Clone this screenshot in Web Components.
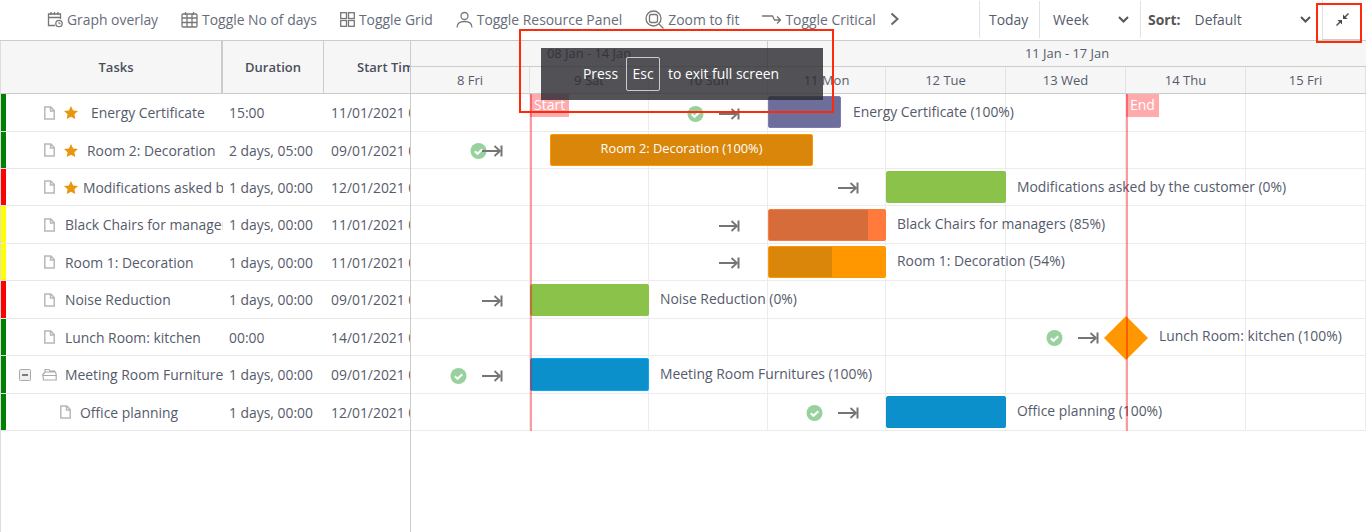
<!DOCTYPE html>
<html lang="en">
<head>
<meta charset="utf-8">
<title>Gantt</title>
<style>
  html, body { margin: 0; height: 100%; background: #fff; overflow: hidden; }
  body {
    font-family: "Open Sans", "Liberation Sans", sans-serif;
    font-size: 13.9px;
    color: #555b6b;
    --rows: 38px 37px 37px 38px 37px 38px 37px 38px 37px;
    --cols: 119px 119px 119px 118px 120px 120px 120px 120px;
  }
  svg { display: block; }
  .ic { fill: none; stroke: #777; stroke-width: 1.3; }
</style>
</head>
<body>
<gantt-app>
  <gantt-toolbar>
    <tool-btn>
      <svg slot="icon" class="ic" width="16" height="17" viewBox="0 0 16 17"><path d="M8 14.500H1.500V3h12v5M1.500 6.500h12M4 1v3M7.500 1v3M11 1v3"/><circle cx="12" cy="12.500" r="3.200"/><path d="M12 10.800v1.900h1.500" stroke-width="1"/></svg>
      Graph overlay
    </tool-btn>
    <tool-btn>
      <svg slot="icon" class="ic" width="17" height="17" viewBox="0 0 17 17"><rect x="1" y="3" width="15" height="13" rx="1"/><path d="M1 7h15M1 11.500h15M6 3v13M11 3v13M4.500 1v3M12.500 1v3"/></svg>
      Toggle No of days
    </tool-btn>
    <tool-btn>
      <svg slot="icon" class="ic" width="15" height="15" viewBox="0 0 15 15"><rect x=".7" y=".7" width="5.800" height="5.800"/><rect x="8.500" y=".7" width="5.800" height="5.800"/><rect x=".7" y="8.500" width="5.800" height="5.800"/><rect x="8.500" y="8.500" width="5.800" height="5.800"/></svg>
      Toggle Grid
    </tool-btn>
    <tool-btn>
      <svg slot="icon" class="ic" width="17" height="17" viewBox="0 0 17 17"><circle cx="8.500" cy="5" r="3.500"/><path d="M1 16.500c0-4 3.200-6 7.500-6s7.500 2 7.500 6"/></svg>
      Toggle Resource Panel
    </tool-btn>
    <tool-btn>
      <svg slot="icon" class="ic" width="19" height="19" viewBox="0 0 19 19"><circle cx="8.500" cy="8.500" r="7.500"/><rect x="4.500" y="4.500" width="8" height="8" rx="2"/><path d="M14 14l4.500 4.500"/></svg>
      Zoom to fit
    </tool-btn>
    <tool-btn>
      <svg slot="icon" class="ic" width="19" height="12" viewBox="0 0 19 12"><path d="M0 3h10.500l2 4h6M15 3.500l3.500 3.500-3.500 3.500"/></svg>
      Toggle Critical
    </tool-btn>
    <svg width="9" height="14" viewBox="0 0 9 14" style="margin-left:-9px;fill:none;stroke:#666;stroke-width:2"><path d="M1.500 1.500l6 5.500-6 5.500"/></svg>
  </gantt-toolbar>
  <gantt-main>
    <task-panel slot="left">
      <task-row status="green" star gap="13" name="Energy Certificate" dur="15:00" start="11/01/2021 00:00"></task-row>
      <task-row status="green" star gap="9" name="Room 2: Decoration" dur="2 days, 05:00" start="09/01/2021 00:00"></task-row>
      <task-row status="red" star gap="5" name="Modifications asked by the customer" dur="1 days, 00:00" start="12/01/2021 00:00"></task-row>
      <task-row status="yellow" name="Black Chairs for managers" dur="1 days, 00:00" start="11/01/2021 00:00"></task-row>
      <task-row status="yellow" name="Room 1: Decoration" dur="1 days, 00:00" start="11/01/2021 00:00"></task-row>
      <task-row status="red" name="Noise Reduction" dur="1 days, 00:00" start="09/01/2021 00:00"></task-row>
      <task-row status="green" name="Lunch Room: kitchen" dur="00:00" start="14/01/2021 00:00"></task-row>
      <task-row status="green" folder name="Meeting Room Furnitures" dur="1 days, 00:00" start="09/01/2021 00:00"></task-row>
      <task-row status="green" child gap="9" name="Office planning" dur="1 days, 00:00" start="12/01/2021 00:00"></task-row>
    </task-panel>
    <gantt-chart slot="right">
      <gantt-row check="695" arrow="719" x="768" w="73" gap="12" color="#6e6e9a" edge="#7c7cb0" label="Energy Certificate (100%)"></gantt-row>
      <gantt-row check="478" arrow="482" x="550" w="263" color="#d9860a" edge="#ff9800" inside label="Room 2: Decoration (100%)"></gantt-row>
      <gantt-row arrow="838" x="886" w="120" color="#8bc34a" edge="#8bc34a" label="Modifications asked by the customer (0%)"></gantt-row>
      <gantt-row top="3" ty="2" arrow="719" x="768" w="118" color="#ff7a3b" edge="#ff7a3b" progress="85" fill="#d66c39" label="Black Chairs for managers (85%)"></gantt-row>
      <gantt-row ty="1" arrow="719" x="768" w="118" color="#ff9800" edge="#ff9800" progress="54" fill="#d9860a" label="Room 1: Decoration (54%)"></gantt-row>
      <gantt-row top="3" ty="2" arrow="482" x="530" w="119" color="#8bc34a" edge="#8bc34a" label="Noise Reduction (0%)"></gantt-row>
      <gantt-row ty="1" check="1054" arrow="1078" milestone="1126" label="Lunch Room: kitchen (100%)"></gantt-row>
      <gantt-row h="33" check="458" arrow="482" x="530" w="119" color="#0c90cc" edge="#00aaff" label="Meeting Room Furnitures (100%)"></gantt-row>
      <gantt-row ty="1" check="814" arrow="838" x="886" w="120" color="#0c90cc" edge="#0c90cc" label="Office planning (100%)"></gantt-row>
    </gantt-chart>
  </gantt-main>
  <fs-toast></fs-toast>
  <red-box x="519" y="29" w="315" h="84"></red-box>
  <red-box x="1316" y="3" w="46" h="40"></red-box>
</gantt-app>

<script>
const ORIGIN = 411;

class GanttApp extends HTMLElement {
  constructor() {
    super();
    this.attachShadow({ mode: "open" });
    this.shadowRoot.innerHTML = `
      <style>
        :host { display: flex; flex-direction: column; position: relative; height: 532px; overflow: hidden; }
      </style>
      <slot></slot>`;
  }
}

class GanttToolbar extends HTMLElement {
  constructor() {
    super();
    this.attachShadow({ mode: "open" });
    this.shadowRoot.innerHTML = `
      <style>
        :host { display: flex; align-items: stretch; height: 40px; flex: none; box-sizing: border-box; padding-left: 47px; white-space: nowrap; }
        .left { display: flex; align-items: center; gap: 23px; height: 38px; }
        .right { margin-left: auto; display: flex; align-items: stretch; height: 40px; }
        .cell { display: flex; align-items: center; height: 37px; margin-top: 1px; border-left: 1px solid #e2e2e2; box-sizing: border-box; }
        .today { width: 60px; padding-left: 9px; }
        .week { width: 101px; padding-left: 13px; }
        .sort { width: 182px; padding-left: 7px; }
        .sort b { font-weight: 700; margin-right: 14px; color: #555; }
        .chev { margin-left: auto; margin-right: 11px; fill: none; stroke: #555; stroke-width: 2; }
        .full { width: 40px; height: 40px; box-sizing: border-box; margin-right: 4px; border-left: 1px solid #e2e2e2; border-bottom: 1px solid #ccc; display: flex; align-items: center; justify-content: center; }
      </style>
      <div class="left"><slot></slot></div>
      <div class="right">
        <div class="cell today">Today</div>
        <div class="cell week">Week
          <svg class="chev" width="11" height="7" viewBox="0 0 11 7"><path d="M1 1l4.500 4.500L10 1"/></svg>
        </div>
        <div class="cell sort"><b>Sort:</b>Default
          <svg class="chev" width="11" height="7" viewBox="0 0 11 7"><path d="M1 1l4.500 4.500L10 1"/></svg>
        </div>
        <div class="full">
          <svg width="13" height="13" viewBox="0 0 13 13"><path fill="#4a4a4a" d="M7 6V1.500L11.500 6zM6 7v4.500L1.500 7z"/><path stroke="#555" stroke-width="1.500" d="M9 4l3.500-3.500M4 9L.5 12.500"/></svg>
        </div>
      </div>`;
  }
}

class ToolBtn extends HTMLElement {
  constructor() {
    super();
    this.attachShadow({ mode: "open" });
    this.shadowRoot.innerHTML = `
      <style>
        :host { display: inline-flex; align-items: center; gap: 4px; color: #666c7a; }
      </style>
      <slot name="icon"></slot><slot></slot>`;
  }
}

class GanttMain extends HTMLElement {
  constructor() {
    super();
    this.attachShadow({ mode: "open" });
    this.shadowRoot.innerHTML = `
      <style>
        :host { display: flex; flex: 1; border-top: 1px solid #ccc; min-height: 0; }
      </style>
      <slot name="left"></slot><slot name="right"></slot>`;
  }
}

class TaskPanel extends HTMLElement {
  constructor() {
    super();
    this.attachShadow({ mode: "open" });
    this.shadowRoot.innerHTML = `
      <style>
        :host { display: block; flex: none; width: 411px; box-sizing: border-box; border-left: 1px solid #ddd; border-right: 1px solid #ccc; overflow: hidden; }
        .head { display: grid; grid-template-columns: 220px 2px 100px 1px 1fr; height: 53px; box-sizing: border-box; background: #f6f6f6; border-bottom: 1px solid #ccc; font-size: 13px; font-weight: 600; color: #4a4f5c; white-space: nowrap; }
        .head div { display: flex; align-items: center; justify-content: center; overflow: hidden; }
        .head i { background: #ccc; }
        .head .tasks { padding-left: 10px; }
        .head .st { justify-content: flex-start; padding-left: 33px; }
        .body { display: grid; grid-template-rows: var(--rows); }
      </style>
      <div class="head"><div class="tasks">Tasks</div><i></i><div>Duration</div><i></i><div class="st">Start Time</div></div>
      <div class="body"><slot></slot></div>`;
  }
}

class TaskRow extends HTMLElement {
  constructor() {
    super();
    this.attachShadow({ mode: "open" });
  }

  connectedCallback() {
    const colors = { green: "#008000", red: "#ff0000", yellow: "#ffff00" };
    const strip = colors[this.getAttribute("status")];
    const gap = this.getAttribute("gap") || 10;
    const doc = `<svg class="doc" width="11" height="14" viewBox="0 0 11 14"><path d="M.8 1h6L10.200 4.500V13H.8zM6.500 1v4h3.700" fill="none" stroke="#b8b8b8" stroke-width="1.500"/></svg>`;
    const star = `<svg class="star" width="14" height="13" viewBox="0 0 14 13"><path fill="#e8960c" d="M7 0l2.100 4.400 4.900.6-3.600 3.300.9 4.700L7 10.700 2.700 13l.9-4.700L0 5l4.900-.6z"/></svg>`;
    const folder = `<svg class="doc" style="margin-left:-2px" width="15" height="13" viewBox="0 0 15 13"><path d="M3 4V1.500h4l1 1.500h4.500v1.500M.8 6.500L3 4h10.500l.7 2.500v5.500H1.500zM1 7.500h13" fill="none" stroke="#aaa" stroke-width="1.200"/></svg>`;
    const toggle = `<svg class="tog" width="12" height="12" viewBox="0 0 12 12"><rect x=".5" y=".5" width="11" height="11" rx="1" fill="#eee" stroke="#aaa"/><path d="M3 6h6" stroke="#555" stroke-width="1.500"/></svg>`;
    const isFolder = this.hasAttribute("folder");
    const gutter = this.hasAttribute("child") ? 54 : 38;

    this.shadowRoot.innerHTML = `
      <style>
        :host { display: flex; align-items: stretch; border-bottom: 1px solid #e8e8e8; white-space: nowrap; min-height: 0; }
        .strip { width: 5px; flex: none; background: ${strip}; }
        .name { width: 217px; flex: none; display: flex; align-items: center; overflow: hidden; }
        .gut { width: ${gutter}px; flex: none; display: flex; align-items: center; padding-left: 13px; box-sizing: border-box; }
        .doc { flex: none; }
        .star { flex: none; margin-left: 9px; }
        .label { margin-left: ${isFolder ? 8 : gap}px; color: #555b6b; }
        .dur { width: 94px; flex: none; padding-left: 6px; display: flex; align-items: center; }
        .start { padding-left: 8px; display: flex; align-items: center; overflow: hidden; flex: 1; min-width: 0; }
      </style>
      <div class="strip"></div>
      <div class="name">
        <div class="gut">${isFolder ? toggle : ""}</div>
        ${isFolder ? folder : doc}${this.hasAttribute("star") ? star : ""}
        <span class="label">${this.getAttribute("name")}</span>
      </div>
      <div class="dur">${this.getAttribute("dur")}</div>
      <div class="start">${this.getAttribute("start")}</div>`;
  }
}

class GanttChart extends HTMLElement {
  constructor() {
    super();
    this.attachShadow({ mode: "open" });
    const days = ["8 Fri", "9 Sat", "10 Sun", "11 Mon", "12 Tue", "13 Wed", "14 Thu", "15 Fri"];
    this.shadowRoot.innerHTML = `
      <style>
        :host { display: block; flex: 1; min-width: 0; position: relative; overflow: hidden; }
        .weeks { display: grid; grid-template-columns: 357px 1fr; height: 26px; box-sizing: border-box; background: #f6f6f6; border-bottom: 1px solid #ccc; font-size: 12.9px; }
        .weeks div { display: flex; align-items: center; justify-content: center; padding-bottom: 2px; box-sizing: border-box; }
        .weeks div:first-child { border-right: 1px solid #ccc; }
        .days { display: grid; grid-template-columns: var(--cols); height: 27px; box-sizing: border-box; background: #f6f6f6; border-bottom: 1px solid #ccc; font-size: 13px; }
        .days div { display: flex; align-items: center; justify-content: center; border-right: 1px solid #e2e2e2; }
        .body { position: relative; display: grid; grid-template-rows: var(--rows); }
        .lines { position: absolute; left: 0; right: 0; top: 0; height: 336px; display: grid; grid-template-columns: var(--cols); }
        .lines i { border-right: 1px solid #ececec; }
        .line { position: absolute; top: 0; width: 2px; height: 337px; background: rgba(255, 0, 10, .4); z-index: 3; }
        .tag { position: absolute; top: 0; height: 23px; line-height: 22px; padding: 0 4px; background: rgba(255, 0, 10, .33); color: #fff; font-size: 14px; z-index: 3; }
        ::slotted(gantt-row) { z-index: 1; }
      </style>
      <div class="weeks"><div>08 Jan - 14 Jan</div><div>11 Jan - 17 Jan</div></div>
      <div class="days">${days.map((d) => `<div>${d}</div>`).join("")}</div>
      <div class="body">
        <div class="lines">${days.map(() => "<i></i>").join("")}</div>
        <slot></slot>
        <div class="line" style="left:${530 - ORIGIN}px"></div>
        <div class="tag" style="left:${530 - ORIGIN}px">Start</div>
        <div class="line" style="left:${1126 - ORIGIN}px"></div>
        <div class="tag" style="left:${1126 - ORIGIN}px">End</div>
      </div>`;
  }
}

class GanttRow extends HTMLElement {
  constructor() {
    super();
    this.attachShadow({ mode: "open" });
  }

  connectedCallback() {
    const num = (name, fallback) => (this.hasAttribute(name) ? Number(this.getAttribute(name)) : fallback);
    const top = num("top", 2);
    const textTop = num("ty", top);
    const h = num("h", 32);
    const label = this.getAttribute("label");
    let html = "";

    if (this.hasAttribute("check")) {
      html += `<svg class="abs mid" style="left:${num("check") - ORIGIN - 8}px" width="17" height="17" viewBox="0 0 17 17"><circle cx="8.500" cy="8.500" r="8" fill="#99d19e"/><path d="M4.800 8.800l2.700 2.500 4.800-4.600" fill="none" stroke="#fff" stroke-width="2"/></svg>`;
    }
    if (this.hasAttribute("arrow")) {
      html += `<svg class="abs mid" style="left:${num("arrow") - ORIGIN}px" width="21" height="13" viewBox="0 0 21 13"><path d="M0 6.500h17.500M12.500 1.500l5.500 5-5.500 5" fill="none" stroke="#757575" stroke-width="1.800"/><path d="M19.500 1v11" fill="none" stroke="#757575" stroke-width="2"/></svg>`;
    }
    if (this.hasAttribute("milestone")) {
      const cx = num("milestone") - ORIGIN;
      html += `<div class="abs dia" style="left:${cx - 22}px"></div><span class="abs txt" style="left:${cx + 33}px;top:${textTop}px;line-height:32px">${label}</span>`;
    } else {
      const x = num("x") - ORIGIN;
      const w = num("w");
      const gap = num("gap", 11);
      const fill = this.hasAttribute("progress")
        ? `<div class="fill" style="width:${this.getAttribute("progress")}%;background:${this.getAttribute("fill")}"></div>`
        : "";
      const inner = this.hasAttribute("inside") ? `<span class="in">${label}</span>` : "";
      html += `<div class="abs bar" style="left:${x}px;top:${top}px;width:${w}px;height:${h}px;background:${this.getAttribute("color")};border-color:${this.getAttribute("edge")}">${fill}${inner}</div>`;
      if (!this.hasAttribute("inside")) {
        html += `<span class="abs txt" style="left:${x + w + gap}px;top:${textTop}px;line-height:${h - 1}px">${label}</span>`;
      }
    }

    this.shadowRoot.innerHTML = `
      <style>
        :host { display: block; position: relative; border-bottom: 1px solid #ececec; min-height: 0; white-space: nowrap; }
        .abs { position: absolute; }
        .mid { top: calc(50% + 1px); transform: translateY(-50%); }
        .bar { box-sizing: border-box; border: 1px solid; border-radius: 2px; overflow: hidden; display: flex; align-items: center; justify-content: center; }
        .fill { position: absolute; left: 0; top: 0; bottom: 0; }
        .in { position: relative; color: #fff; font-size: 12.800px; margin-top: -5px; }
        .txt { color: #555b6b; }
        .dia { top: -3px; width: 44px; height: 44px; background: #ff9800; clip-path: polygon(50% 0, 100% 50%, 50% 100%, 0 50%); }
      </style>${html}`;
  }
}

class FsToast extends HTMLElement {
  constructor() {
    super();
    this.attachShadow({ mode: "open" });
    this.shadowRoot.innerHTML = `
      <style>
        :host { position: absolute; left: 541px; top: 48px; width: 282px; height: 52px; box-sizing: border-box; padding-right: 2px; z-index: 10; display: flex; align-items: center; justify-content: center; gap: 8px; background: rgba(44, 44, 50, .82); color: #fff; white-space: nowrap; }
        span { margin-top: -2px; }
        .key { display: flex; align-items: center; justify-content: center; margin-top: 0; width: 34px; height: 34px; box-sizing: border-box; border: 1px solid rgba(255, 255, 255, .7); border-radius: 2px; padding-bottom: 2px; }
      </style>
      <span>Press</span><span class="key">Esc</span><span>to exit full screen</span>`;
  }
}

class RedBox extends HTMLElement {
  constructor() {
    super();
    this.attachShadow({ mode: "open" });
    this.shadowRoot.innerHTML = `
      <style>
        :host { position: absolute; box-sizing: border-box; border: 2px solid #ff2a0a; z-index: 11; }
      </style>`;
  }

  connectedCallback() {
    this.style.left = this.getAttribute("x") + "px";
    this.style.top = this.getAttribute("y") + "px";
    this.style.width = this.getAttribute("w") + "px";
    this.style.height = this.getAttribute("h") + "px";
  }
}

customElements.define("gantt-app", GanttApp);
customElements.define("gantt-toolbar", GanttToolbar);
customElements.define("tool-btn", ToolBtn);
customElements.define("gantt-main", GanttMain);
customElements.define("task-panel", TaskPanel);
customElements.define("task-row", TaskRow);
customElements.define("gantt-chart", GanttChart);
customElements.define("gantt-row", GanttRow);
customElements.define("fs-toast", FsToast);
customElements.define("red-box", RedBox);
</script>
</body>
</html>
